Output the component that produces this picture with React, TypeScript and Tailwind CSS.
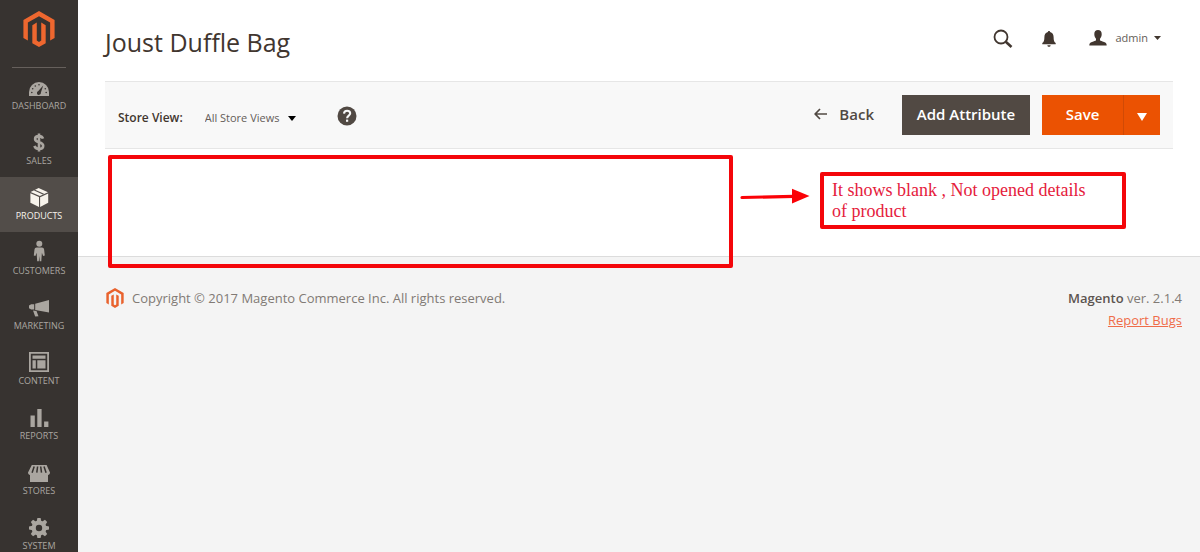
import type { ReactNode } from "react";

function MagentoLogo({ className }: { className: string }) {
  return (
    <svg viewBox="0 0 24 24" className={className} fill="currentColor" aria-hidden="true">
      <path d="M12 24l-4.455-2.572v-12l2.97-1.715v12.001l1.485.902 1.485-.902V7.713l2.971 1.715v12L12 24zM22.391 6v12l-2.969 1.714V7.713L12 3.43 4.574 7.713v12.001L1.609 18V6L12 0l10.391 6z" />
    </svg>
  );
}

const teeth = [0, 45, 90, 135, 180, 225, 270, 315];

const menu: { label: string; icon: ReactNode; active?: boolean }[] = [
  {
    label: "Dashboard",
    icon: (
      <>
        <path d="M2 20v-4a10 10 0 0 1 20 0v4z" />
        <g className="fill-[#373330]">
          <path d="M16.2 9.6l-2.3 7a2 2 0 1 1-2.6-1.6z" />
          <circle cx="4.8" cy="16.5" r=".8" />
          <circle cx="5.7" cy="12.8" r=".8" />
          <circle cx="8.3" cy="10" r=".8" />
          <circle cx="12" cy="8.8" r=".8" />
          <circle cx="18.3" cy="12.8" r=".8" />
          <circle cx="19.2" cy="16.5" r=".8" />
        </g>
      </>
    ),
  },
  {
    label: "Sales",
    icon: (
      <path
        d="M16 7.6C15.4 5.9 14 5.1 12 5.1c-2.400 0-3.900 1.100-3.900 2.900 0 4.200 8.100 2.300 8.100 6.700 0 2-1.700 3.200-4.200 3.200-2.300 0-4-1-4.500-3M12 2.500v18"
        fill="none"
        stroke="currentColor"
        strokeWidth="2.600"
      />
    ),
  },
  {
    label: "Products",
    active: true,
    icon: (
      <>
        <path d="M11.600 2L21 6.300 12.900 10 3.600 5.900z" />
        <path d="M3.400 7.200l8.600 3.900V21l-8.600-4.200z" />
        <path d="M21.200 7.500l-8.100 3.700V21l8.100-4.200z" />
        <path d="M7.300 4l9.400 4.300" fill="none" stroke="#524d49" strokeWidth="1.200" />
      </>
    ),
  },
  {
    label: "Customers",
    icon: (
      <>
        <circle cx="12.300" cy="2.800" r="3" />
        <path d="M9.700 6.400h5.200c1.300 0 2 .8 2.200 2l.7 6-1.700.5-1.200-3.200-.6 8.500h-1.600l-.4-5.200-.5 5.200h-1.600l-.6-8.500-1.200 3.200-1.600-.5.7-6c.2-1.200.9-2 2.200-2z" />
      </>
    ),
  },
  {
    label: "Marketing",
    icon: (
      <>
        <path d="M8.200 7.700L22 4v12.500L8.200 13.900z" />
        <path d="M4.200 8.200h3v5.400h-3L2 12.200V9.600z" />
        <path d="M6 14.400l3.500.5 2 5.300-3.300.3z" />
      </>
    ),
  },
  {
    label: "Content",
    icon: (
      <>
        <path d="M2 1h20v20H2zM3.800 2.800v16.400h16.400V2.800z" fillRule="evenodd" />
        <path d="M5.500 4.500h13v3.300h-13zM5.500 9.200h3.300v8.300H5.500zM10.300 9.200h8.200v8.300h-8.200z" />
      </>
    ),
  },
  {
    label: "Reports",
    icon: <path d="M3.500 9.500h4.300V21H3.500zM10.300 3h4.300v18h-4.300zM17.100 15.500h4.300V21h-4.300z" />,
  },
  {
    label: "Stores",
    icon: (
      <>
        <path d="M4.800 4h14.800L23 11.500c0 1.500-1 2.500-2 2.500v7H3v-7c-1 0-2-1-2-2.500z" />
        <path
          d="M7.200 5.500l-2.100 6.200M10.600 5.500l-.8 6.200M13.700 5.500l.8 6.200M17 5.500l2.100 6.200"
          stroke="#373330"
          strokeWidth="1.500"
        />
      </>
    ),
  },
  {
    label: "System",
    icon: (
      <>
        <circle cx="12" cy="12" r="5.300" fill="none" stroke="currentColor" strokeWidth="4.200" />
        {teeth.map((angle) => (
          <path key={angle} d="M9.700 5.500l.7-3.500h3.200l.7 3.500z" transform={`rotate(${angle} 12 12)`} />
        ))}
      </>
    ),
  },
];

function Caret({ className }: { className: string }) {
  return (
    <svg viewBox="0 0 8 5" preserveAspectRatio="none" className={className} fill="currentColor" aria-hidden="true">
      <path d="M0 0h8L4 5z" />
    </svg>
  );
}

function Sidebar() {
  return (
    <nav aria-label="Main menu" className="sticky top-0 h-screen w-[78px] shrink-0 overflow-hidden bg-[#373330]">
      <a href="#home" aria-label="Magento Admin" className="flex h-[67px] justify-center pt-[11px] text-[#ee672f]">
        <MagentoLogo className="size-9" />
      </a>
      <div className="mx-3 -mb-px border-t border-[#66605c]" />
      <ul>
        {menu.map((item) => (
          <li key={item.label}>
            <a
              href={`#${item.label.toLowerCase()}`}
              className={
                item.active
                  ? "flex h-[55px] flex-col items-center bg-[#524d49] pt-[9px] text-[#f7f3eb]"
                  : "flex h-[55px] flex-col items-center pt-[9px] text-[#aaa6a0]"
              }
            >
              <svg viewBox="0 0 24 24" className="size-6 overflow-visible" fill="currentColor" aria-hidden="true">
                {item.icon}
              </svg>
              <span className="text-[9px] leading-3 uppercase">{item.label}</span>
            </a>
          </li>
        ))}
      </ul>
    </nav>
  );
}

function Header() {
  return (
    <header className="flex h-[81px] items-start justify-between pr-[39px] pl-[27px]">
      <h1 className="pt-6 text-[25px] leading-9 text-[#41362f]">Joust Duffle Bag</h1>
      <div className="flex items-center pt-[26px] text-[#41362f]">
        <button type="button" aria-label="Search" className="mr-[29px] pt-0.5">
          <svg viewBox="0 0 20 20" className="size-5" fill="none" stroke="currentColor" aria-hidden="true">
            <circle cx="8" cy="8" r="6.500" strokeWidth="1.800" />
            <path d="M12.800 12.800l5.700 5.200" strokeWidth="2.600" />
          </svg>
        </button>
        <button type="button" aria-label="Notifications" className="mr-[33px] pt-0.5">
          <svg viewBox="0 0 14 16" className="h-4 w-3.5" fill="currentColor" aria-hidden="true">
            <path d="M7 0c.7 0 1.100.5 1.100 1.100C10.500 1.700 11.600 3.500 11.600 6c0 3.500.6 5 2.100 6v1.300H.3V12c1.500-1 2.100-2.500 2.100-6 0-2.500 1.100-4.300 3.500-4.900C5.900.5 6.300 0 7 0zM5.400 14.200h3.200c0 1-.7 1.600-1.600 1.600s-1.600-.6-1.600-1.600z" />
          </svg>
        </button>
        <button type="button" className="flex h-6 items-center text-[11px]">
          <svg viewBox="0 0 18 16" className="mr-2 h-4 w-[18px]" fill="currentColor" aria-hidden="true">
            <path d="M9 0c2.300 0 3.700 1.500 3.700 4.100 0 2-.7 3.700-1.700 4.700v1.500c.5.700 2 1 4 1.700 2 .7 2.700 1.500 2.700 3.500H.3c0-2 .7-2.800 2.700-3.500 2-.7 3.500-1 4-1.700V8.800C6 7.800 5.300 6.100 5.300 4.100 5.300 1.500 6.700 0 9 0z" />
          </svg>
          <span className="text-[#655d58]">admin</span>
          <Caret className="ml-1.5 h-1 w-[7px]" />
        </button>
      </div>
    </header>
  );
}

function Toolbar() {
  return (
    <div className="mx-[27px] flex h-[68px] items-center justify-between border-y border-[#e6e6e6] bg-[#f8f8f8] px-[13px]">
      <div className="flex items-center text-[#41362f]">
        <label htmlFor="store-view" className="pt-1.5 text-[12px] font-semibold">
          Store View:
        </label>
        <div className="relative ml-[22px] flex items-center pt-1.5">
          <select
            id="store-view"
            className="w-[91px] cursor-pointer appearance-none bg-transparent text-[11px] text-[#655d58]"
          >
            <option>All Store Views</option>
          </select>
          <Caret className="pointer-events-none absolute right-0 h-[5px] w-2 text-black" />
        </div>
        <button type="button" aria-label="Help" className="ml-[41px] pt-0.5">
          <svg viewBox="0 0 20 20" className="size-5" aria-hidden="true">
            <circle cx="10" cy="10" r="9.500" fill="#514943" />
            <path
              d="M7 7.600c.1-1.900 1.300-2.900 3.100-2.900s3.100 1 3.100 2.600c0 2.300-3.100 2.300-3.100 4.900"
              fill="none"
              stroke="#f8f8f8"
              strokeWidth="2.100"
            />
            <path d="M9 13.600h2.200v2.200H9z" fill="#f8f8f8" />
          </svg>
        </button>
      </div>
      <div className="flex items-center text-[15px] font-semibold">
        <button type="button" className="mr-7 flex h-10 items-center gap-3 pb-0.5 text-[#514943]">
          <svg
            viewBox="0 0 13 12"
            className="h-3 w-[13px]"
            fill="none"
            stroke="currentColor"
            strokeWidth="1.700"
            aria-hidden="true"
          >
            <path d="M13 6H1.500M6 1L1.200 6 6 11" />
          </svg>
          Back
        </button>
        <button type="button" className="mr-3 h-10 w-32 bg-[#514943] pb-0.5 text-white">
          Add Attribute
        </button>
        <button type="button" className="h-10 w-[81px] bg-[#eb5202] pb-0.5 text-white">
          Save
        </button>
        <button
          type="button"
          aria-label="More save options"
          className="flex h-10 w-[37px] items-center justify-center border-l border-[#d04a05] bg-[#eb5202] pt-1 text-white"
        >
          <Caret className="h-2 w-2.5" />
        </button>
      </div>
    </div>
  );
}

function Annotations() {
  return (
    <>
      <div className="absolute top-1.5 left-[30px] h-[113px] w-[625px] rounded-xs border-4 border-[#f4060a]" />
      <svg viewBox="0 0 70 16" className="absolute top-[39px] left-[662px] h-4 w-[70px]" aria-hidden="true">
        <path d="M2 9.500L54 8.300" stroke="#fb0207" strokeWidth="3.200" strokeLinecap="round" />
        <path d="M52 .8L69.500 8 52 15.500z" fill="#fb0207" />
      </svg>
      <p className="absolute top-[23px] left-[742px] h-[57px] w-[306px] rounded-xs border-4 border-[#f4060a] bg-white pt-1 pr-8 pl-2 font-['Liberation_Serif',serif] text-[18px] leading-[21px] text-[#e5203c]">
        It shows blank , Not opened details of product
      </p>
    </>
  );
}

export default function App() {
  return (
    <div className="flex min-h-screen bg-[#f4f4f4] font-['Open_Sans',sans-serif]">
      <Sidebar />
      <div className="min-w-0 grow">
        <div className="border-b border-[#dcdcdc] bg-white">
          <Header />
          <Toolbar />
          <main className="relative h-[107px]">
            <Annotations />
          </main>
        </div>
        <footer className="flex items-start justify-between pt-[30px] pr-[18px] pl-[27px] text-[13px] leading-[22px] text-[#817a75]">
          <p className="flex items-center gap-[7px]">
            <MagentoLogo className="size-5 text-[#e9622d]" />
            Copyright © 2017 Magento Commerce Inc. All rights reserved.
          </p>
          <div className="text-right">
            <p>
              <strong className="font-semibold text-[#5c5450]">Magento</strong> ver. 2.1.4
            </p>
            <a href="#report" className="text-[#ef6c4a] underline">
              Report Bugs
            </a>
          </div>
        </footer>
      </div>
    </div>
  );
}
